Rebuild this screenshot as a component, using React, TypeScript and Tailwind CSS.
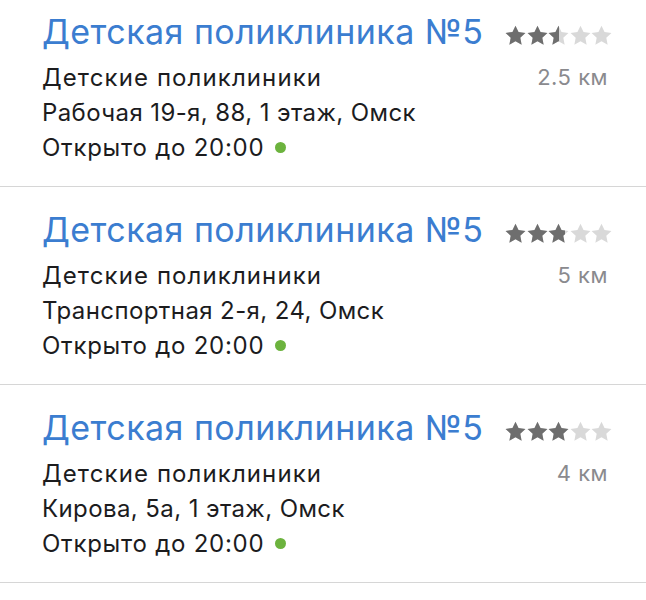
import React from "react";

type Clinic = {
  name: string;
  category: string;
  address: string;
  hours: string;
  distance: string;
  rating: number;
};

const clinics: Clinic[] = [
  { name: "Детская поликлиника №5", category: "Детские поликлиники", address: "Рабочая 19-я, 88, 1 этаж, Омск", hours: "Открыто до 20:00", distance: "2.5 км", rating: 2.5 },
  { name: "Детская поликлиника №5", category: "Детские поликлиники", address: "Транспортная 2-я, 24, Омск", hours: "Открыто до 20:00", distance: "5 км", rating: 2.8 },
  { name: "Детская поликлиника №5", category: "Детские поликлиники", address: "Кирова, 5а, 1 этаж, Омск", hours: "Открыто до 20:00", distance: "4 км", rating: 3 },
];

const STAR = "M10 1l2.7 5.7 6.2.8-4.6 4.3 1.2 6.2L10 15l-5.5 3 1.2-6.2L1.1 7.5l6.2-.8z";

const Stars = ({ rating }: { rating: number }) => (
  <div className="flex gap-[0.5px]">
    {[0, 1, 2, 3, 4].map((i) => {
      const fill = Math.max(0, Math.min(1, rating - i));
      return (
        <div key={i} className="relative h-[21px] w-[21px]">
          <svg viewBox="0.6 0.4 18.8 18.8" className="absolute inset-0 h-[21px] w-[21px]">
            <path d={STAR} fill="#d9d9d9" />
          </svg>
          <div className="absolute inset-y-0 left-0 overflow-hidden" style={{ width: `${fill * 21}px` }}>
            <svg viewBox="0.6 0.4 18.8 18.8" className="h-[21px] w-[21px]">
              <path d={STAR} fill="#6e6e6e" />
            </svg>
          </div>
        </div>
      );
    })}
  </div>
);

const ClinicRow = ({ c, first }: { c: Clinic; first: boolean }) => (
  <div className={`border-b border-[#d6d6d6] pl-[42px] pr-[34px] pb-[21px] ${first ? "pt-[12px]" : "pt-[23px]"}`}>
    <div className="flex items-center justify-between">
      <h2 className="text-[34px] leading-[40px] tracking-[0.45px] text-[#3b7dd0]">{c.name}</h2>
      <div className="mt-[6px]">
        <Stars rating={c.rating} />
      </div>
    </div>
    <div className="mt-[8px] text-[24px] leading-[35px] tracking-[0.75px] text-[#1c1c1e]">
      <div className="flex justify-between">
        <span className="tracking-[1.1px]">{c.category}</span>
        <span className="mr-[4px] text-[22px] tracking-[0.5px] text-[#8a8a8e]">{c.distance}</span>
      </div>
      <div className="tracking-[0.4px]">{c.address}</div>
      <div className="flex items-center gap-[11px]">
        <span>{c.hours}</span>
        <span className="h-[11px] w-[11px] rounded-full bg-[#6cb33e]" />
      </div>
    </div>
  </div>
);

export default function App() {
  return (
    <div className="min-h-[600px] w-[646px] bg-white" style={{ fontFamily: "Inter, 'Noto Sans', sans-serif" }}>
      {clinics.map((c, i) => (
        <ClinicRow key={i} c={c} first={i === 0} />
      ))}
    </div>
  );
}
